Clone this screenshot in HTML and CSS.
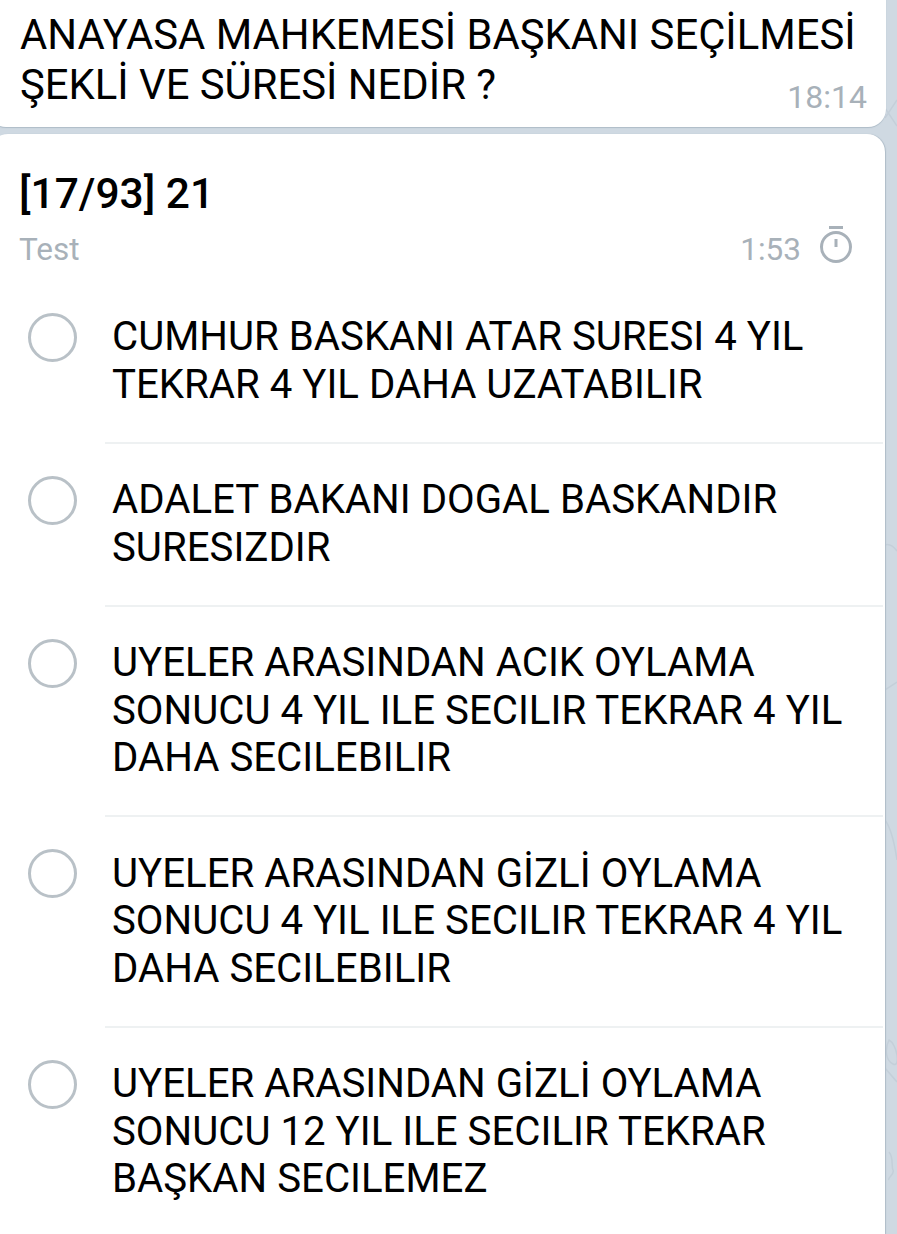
FILE: index.html

```html
<!DOCTYPE html>
<html lang="tr">
<head>
  <meta charset="UTF-8" />
  <title>Test</title>
  <link rel="stylesheet" href="styles.css">
</head>
<body>
  <svg class="doodles" viewBox="0 0 12 1234" width="12" height="1234">
    <path d="M0 118l12-18M0 108l12 18M0 545c5-2 9 2 12 6M0 690l12-8M0 820c6 8 9 20 12 40M4 1040c-4 8-4 20 4 24s4-20-4-24zM0 1068l12 14M4 1152c5 6 2 14 4 18s-6 8-4 10" />
  </svg>

  <div class="message">
    <p class="message-text">ANAYASA MAHKEMESİ BAŞKANI SEÇİLMESİ<br>ŞEKLİ VE SÜRESİ NEDİR ?</p>
    <span class="message-time">18:14</span>
  </div>

  <div class="poll">
    <div class="poll-title">[17/93] 21</div>
    <div class="poll-meta">
      <span>Test</span>
      <span class="poll-timer">1:53
        <svg class="timer-icon" viewBox="0 0 36 40" width="36" height="40">
          <path d="M11 2.5h14" />
          <circle cx="18" cy="22" r="14.5" />
          <path d="M18 14v8" />
        </svg>
      </span>
    </div>

    <div class="option">
      <div class="radio"></div>
      <div class="option-text">CUMHUR BASKANI ATAR SURESI 4 YIL<br>TEKRAR 4 YIL DAHA UZATABILIR</div>
    </div>
    <div class="option">
      <div class="radio"></div>
      <div class="option-text">ADALET BAKANI DOGAL BASKANDIR<br>SURESIZDIR</div>
    </div>
    <div class="option">
      <div class="radio"></div>
      <div class="option-text">UYELER ARASINDAN ACIK OYLAMA<br>SONUCU 4 YIL ILE SECILIR TEKRAR 4 YIL<br>DAHA SECILEBILIR</div>
    </div>
    <div class="option">
      <div class="radio"></div>
      <div class="option-text">UYELER ARASINDAN GİZLİ OYLAMA<br>SONUCU 4 YIL ILE SECILIR TEKRAR 4 YIL<br>DAHA SECILEBILIR</div>
    </div>
    <div class="option">
      <div class="radio"></div>
      <div class="option-text">UYELER ARASINDAN GİZLİ OYLAMA<br>SONUCU 12 YIL ILE SECILIR TEKRAR<br>BAŞKAN SECILEMEZ</div>
    </div>
  </div>
</body>
</html>
```

FILE: styles.css

```css
html, body { height: 100%; overflow: hidden; }
body {
  display: flex; flex-direction: column; background: #cfd9e2; color: #000;
  font-family: Roboto, sans-serif; margin: 0;
}

.doodles { position: absolute; top: 0; right: 0; fill: none; stroke: #c4cfd9; stroke-width: 1.5; }

.message {
  position: relative; display: flex; flex: none; justify-content: space-between; margin: -20px 11px 7px -12px;
  height: 147px; box-sizing: border-box; padding: 30px 19px 0 32px; background: #fff;
  border-radius: 18px; box-shadow: 0 1px 1px #aebcc8;
}
.message-text { margin: 0; flex: 1; min-width: 0; font-size: 41.8px; line-height: 50px; white-space: nowrap; }
.message-time { flex: none; align-self: flex-end; margin-bottom: 10px; font-size: 32px; line-height: 40px; color: #a8b1b9; }

.poll {
  position: relative; flex: 1; min-height: 0; overflow: hidden; margin: 0 12px 0 -10px; padding: 36px 0 0 10px;
  background: #fff; border-radius: 18px 18px 0 0; box-shadow: 1px 0 1px #aebcc8;
}
.poll-title { padding-left: 19px; font-size: 42.5px; line-height: 48px; font-weight: 500; }
.poll-meta {
  display: flex; justify-content: space-between; align-items: center;
  margin-top: 12px; padding: 0 31px 0 19px; font-size: 31.5px; line-height: 40px; color: #a8b1b9;
}
.poll-timer { display: flex; align-items: center; gap: 17px; }
.timer-icon { fill: none; stroke: #a8b1b9; stroke-width: 3; margin-top: -10px; }

.option { display: flex; padding-left: 28px; }
.poll-meta + .option { margin-top: 10.5px; }
.radio {
  flex: none; width: 49px; height: 49px; box-sizing: border-box; margin-top: 32px;
  border: 3px solid #b9c1c7; border-radius: 50%;
}
.option-text {
  flex: 1; margin: 0 2px 0 28px; padding: 32.5px 0 33.5px 7px; border-bottom: 2px solid #eef1f2;
  font-size: 40.2px; line-height: 47.5px; white-space: nowrap;
}
.option:last-child .option-text { border-bottom: none; padding-bottom: 0; }
```
